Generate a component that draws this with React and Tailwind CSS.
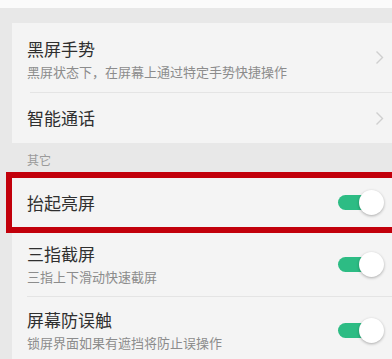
import React from "react";

const font = { fontFamily: '"Noto Sans CJK SC", "Noto Sans", sans-serif' };

function Chevron() {
  return (
    <svg width="9" height="15" viewBox="0 0 9 15" className="shrink-0">
      <path d="M1.5 1.5 L7.5 7.5 L1.5 13.5" fill="none" stroke="#cfcfcf" strokeWidth="1.4" />
    </svg>
  );
}

function Toggle() {
  return (
    <div className="relative w-[46px] h-[25px] shrink-0">
      <div className="absolute left-0 top-[5px] w-[36px] h-[15px] rounded-full bg-[#2dbc84]" />
      <div className="absolute right-0 top-0 w-[25px] h-[25px] rounded-full bg-white shadow-[0_1px_3px_rgba(0,0,0,0.3)]" />
    </div>
  );
}

function Title({ children }) {
  return <div className="text-[17px] leading-[22px] text-[#2f2f2f]">{children}</div>;
}
function Sub({ children }) {
  return <div className="text-[13px] leading-[18px] text-[#8c8c8c] mt-[3px]">{children}</div>;
}

export default function App() {
  return (
    <div className="w-[392px] h-[359px] overflow-hidden bg-[#e8e8e8]" style={font}>
      <div className="h-[8px] bg-[#fbfbfb]" />
      <div className="pt-[15px]">
        <div className="ml-[12px] bg-[#f4f4f4]">
          <div className="h-[69px] flex items-center pl-[15px] pr-[8px]">
            <div className="flex-1 pt-[3px]">
              <Title>黑屏手势</Title>
              <Sub>黑屏状态下，在屏幕上通过特定手势快捷操作</Sub>
            </div>
            <Chevron />
          </div>
          <div className="ml-[18px] h-px bg-[#e4e4e4]" />
          <div className="h-[50px] flex items-center pl-[15px] pr-[8px]">
            <div className="flex-1">
              <Title>智能通话</Title>
            </div>
            <Chevron />
          </div>
        </div>
        <div className="h-[29px] flex items-center pl-[27px] pt-[4px] text-[12px] text-[#9a9a9a]">其它</div>
        <div className="ml-[6px] w-[400px] border-[6px] border-r-0 border-[#c2000b] bg-[#f4f4f4]">
          <div className="h-[49px] flex items-center pl-[15px] pr-[14px] w-[386px]">
            <div className="flex-1">
              <Title>抬起亮屏</Title>
            </div>
            <Toggle />
          </div>
        </div>
        <div className="ml-[12px] bg-[#f4f4f4]">
          <div className="h-[63px] flex items-center pl-[15px] pr-[8px]">
            <div className="flex-1">
              <Title>三指截屏</Title>
              <Sub>三指上下滑动快速截屏</Sub>
            </div>
            <Toggle />
          </div>
          <div className="ml-[15px] h-px bg-[#e4e4e4]" />
          <div className="h-[66px] flex items-center pl-[15px] pr-[8px]">
            <div className="flex-1">
              <Title>屏幕防误触</Title>
              <Sub>锁屏界面如果有遮挡将防止误操作</Sub>
            </div>
            <Toggle />
          </div>
        </div>
      </div>
    </div>
  );
}
